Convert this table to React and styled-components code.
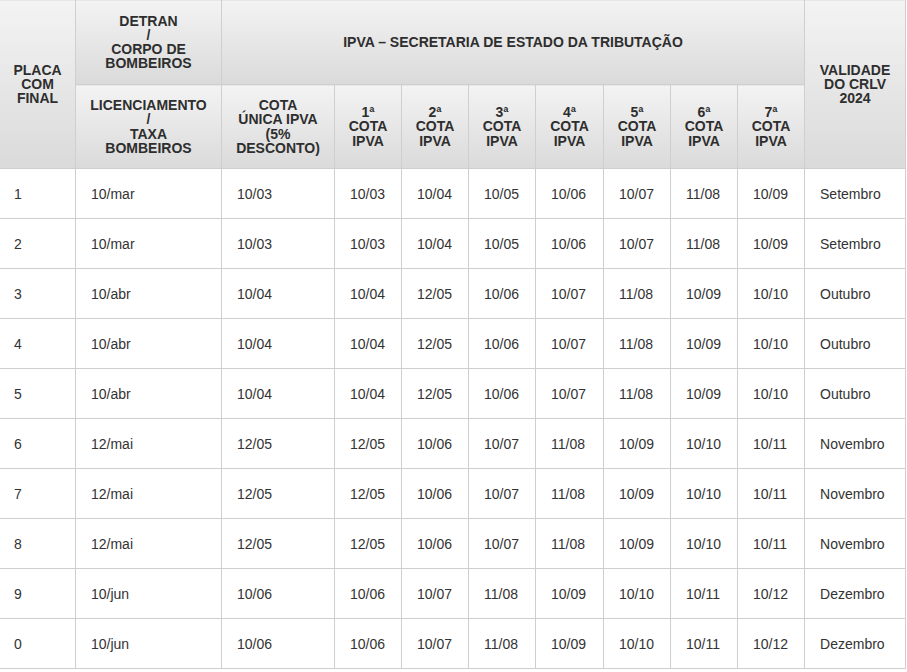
import React from 'react';
import styled, { createGlobalStyle } from 'styled-components';

const GlobalStyle = createGlobalStyle`
  body {
    margin: 0;
    background: #fff;
    font-family: "Liberation Sans", Arial, sans-serif;
  }
`;

const widths = [76, 146, 113, 67, 67, 67, 68, 67, 67, 67, 101];

const rows = [
  ['1', '10/mar', '10/03', '10/03', '10/04', '10/05', '10/06', '10/07', '11/08', '10/09', 'Setembro'],
  ['2', '10/mar', '10/03', '10/03', '10/04', '10/05', '10/06', '10/07', '11/08', '10/09', 'Setembro'],
  ['3', '10/abr', '10/04', '10/04', '12/05', '10/06', '10/07', '11/08', '10/09', '10/10', 'Outubro'],
  ['4', '10/abr', '10/04', '10/04', '12/05', '10/06', '10/07', '11/08', '10/09', '10/10', 'Outubro'],
  ['5', '10/abr', '10/04', '10/04', '12/05', '10/06', '10/07', '11/08', '10/09', '10/10', 'Outubro'],
  ['6', '12/mai', '12/05', '12/05', '10/06', '10/07', '11/08', '10/09', '10/10', '10/11', 'Novembro'],
  ['7', '12/mai', '12/05', '12/05', '10/06', '10/07', '11/08', '10/09', '10/10', '10/11', 'Novembro'],
  ['8', '12/mai', '12/05', '12/05', '10/06', '10/07', '11/08', '10/09', '10/10', '10/11', 'Novembro'],
  ['9', '10/jun', '10/06', '10/06', '10/07', '11/08', '10/09', '10/10', '10/11', '10/12', 'Dezembro'],
  ['0', '10/jun', '10/06', '10/06', '10/07', '11/08', '10/09', '10/10', '10/11', '10/12', 'Dezembro'],
];

const Table = styled.table`
  border-collapse: collapse;
  table-layout: fixed;
  width: 906px;
  margin: -1px 0 0 -1px;
  color: #333;
`;

const HeadRow = styled.tr`
  height: ${(p) => p.$h || 84}px;
`;

const Row = styled.tr`
  height: 50px;
`;

const HeadCell = styled.th`
  border: 1px solid #cfcfcf;
  background: linear-gradient(to bottom, #f3f3f3, #dadada);
  padding: 0 6px;
  font-size: 14px;
  line-height: 14.2px;
  font-weight: bold;
  text-align: center;
  vertical-align: middle;
  color: #2e2e2e;
`;

const Cell = styled.td`
  border: 1px solid #cfcfcf;
  padding: 0 0 0 ${(p) => (p.$first ? 14 : 15)}px;
  font-size: 14px;
  text-align: left;
  vertical-align: middle;
  white-space: nowrap;
`;

function Lines({ text }) {
  const parts = text.split('|');
  return parts.map((t, i) => (
    <React.Fragment key={i}>
      {i > 0 && <br />}
      {t}
    </React.Fragment>
  ));
}

export default function App() {
  const cotas = ['1ª', '2ª', '3ª', '4ª', '5ª', '6ª', '7ª'];
  return (
    <>
      <GlobalStyle />
      <Table>
        <colgroup>
          {widths.map((w, i) => (
            <col key={i} style={{ width: w }} />
          ))}
        </colgroup>
        <thead>
          <HeadRow $h={85}>
            <HeadCell rowSpan={2}><Lines text="PLACA|COM|FINAL" /></HeadCell>
            <HeadCell><Lines text="DETRAN|/|CORPO DE|BOMBEIROS" /></HeadCell>
            <HeadCell colSpan={8}>IPVA – SECRETARIA DE ESTADO DA TRIBUTAÇÃO</HeadCell>
            <HeadCell rowSpan={2}><Lines text="VALIDADE|DO CRLV|2024" /></HeadCell>
          </HeadRow>
          <HeadRow>
            <HeadCell><Lines text="LICENCIAMENTO|/|TAXA|BOMBEIROS" /></HeadCell>
            <HeadCell><Lines text="COTA|ÚNICA IPVA|(5%|DESCONTO)" /></HeadCell>
            {cotas.map((c) => (
              <HeadCell key={c}><Lines text={`${c}|COTA|IPVA`} /></HeadCell>
            ))}
          </HeadRow>
        </thead>
        <tbody>
          {rows.map((r, i) => (
            <Row key={i}>
              {r.map((v, j) => (
                <Cell key={j} $first={j === 0}>{v}</Cell>
              ))}
            </Row>
          ))}
        </tbody>
      </Table>
    </>
  );
}
